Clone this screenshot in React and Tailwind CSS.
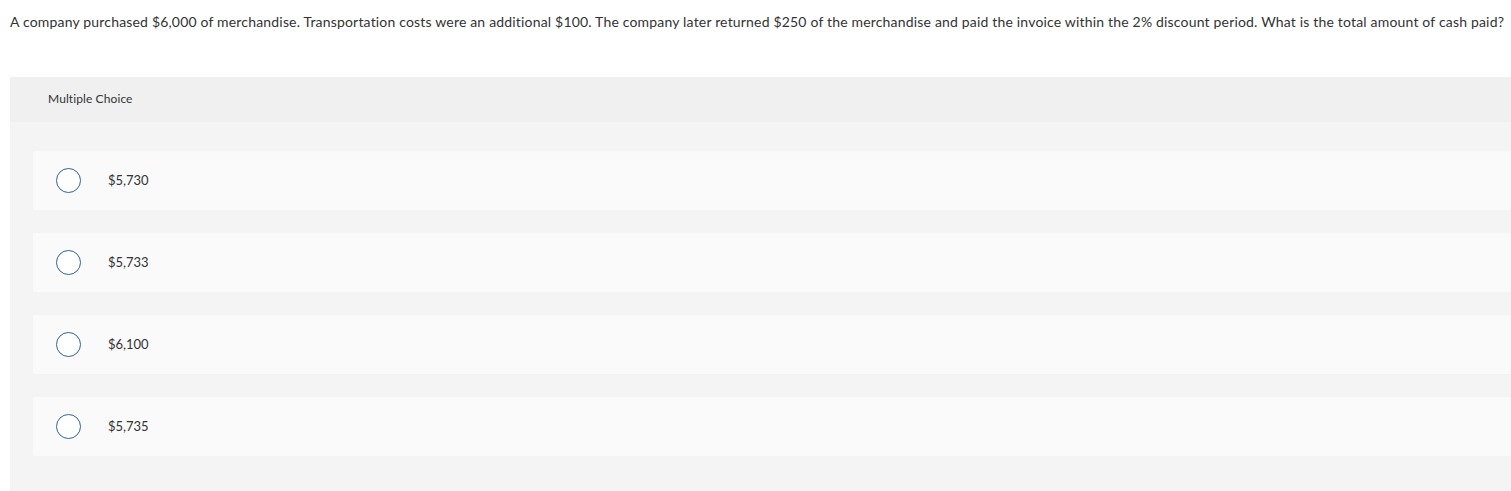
const options = ["$5,730", "$5,733", "$6,100", "$5,735"];

const font = { fontFamily: "Lato, 'Open Sans', sans-serif" };

export default function App() {
  return (
    <div className="w-[1511px] h-[491px] overflow-hidden bg-white text-[#333]" style={font}>
      <p className="pl-[10px] pt-[12px] text-[14px] leading-[20px] tracking-[0.18px] whitespace-nowrap">
        A company purchased $6,000 of merchandise. Transportation costs were an additional $100. The company later returned $250 of the merchandise and paid the invoice within the 2% discount period. What is the total amount of cash paid?
      </p>
      <div className="ml-[10px] mt-[45px] w-[1520px] bg-[#f4f4f4] pb-[40px]">
        <div className="h-[45px] bg-[#f0f0f0] flex items-center pl-[38px] pb-[1px] text-[12px] tracking-[0.1px]">
          Multiple Choice
        </div>
        <div className="pt-[29px] pl-[23px] flex flex-col gap-[23px]">
          {options.map((o) => (
            <div key={o} className="h-[59px] bg-[#fafafa] rounded-[2px] flex items-center">
              <span className="ml-[23px] w-[25px] h-[25px] rounded-full border-[1.5px] border-[#2f6496] bg-white" />
              <span className="ml-[27px] text-[13px]">{o}</span>
            </div>
          ))}
        </div>
      </div>
    </div>
  );
}
